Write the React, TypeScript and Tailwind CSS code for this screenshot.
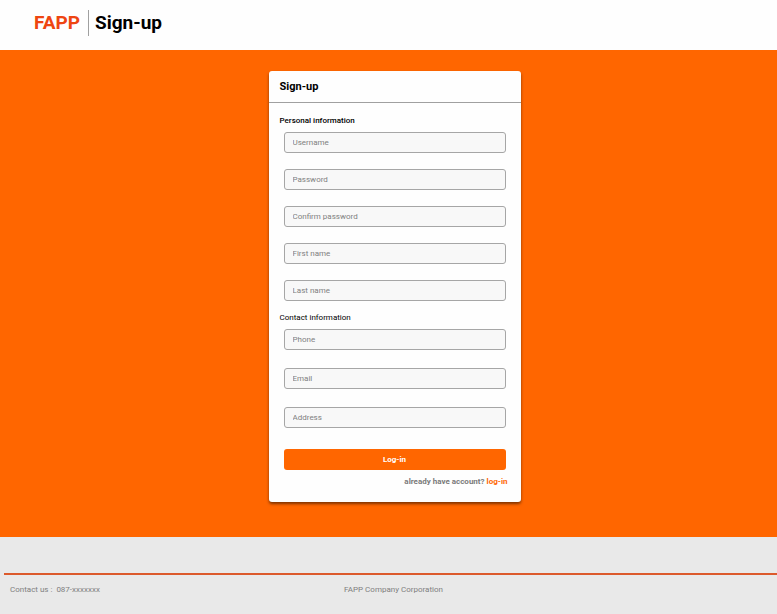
type FieldProps = { id: string; label: string; type?: string };

function Field({ id, label, type = "text" }: FieldProps) {
  return (
    <input
      id={id}
      name={id}
      type={type}
      aria-label={label}
      placeholder={label}
      className="block h-[21px] w-full rounded-[3px] border border-[#a6a6a6] bg-[#f8f8f8] px-2 text-[8px] leading-3 text-gray-800 placeholder:text-[#808080] focus:border-[#ff6600] focus:outline-none"
    />
  );
}

const personalFields: FieldProps[] = [
  { id: "username", label: "Username" },
  { id: "password", label: "Password", type: "password" },
  { id: "confirm-password", label: "Confirm password", type: "password" },
  { id: "first-name", label: "First name" },
  { id: "last-name", label: "Last name" },
];

const contactFields: FieldProps[] = [
  { id: "phone", label: "Phone", type: "tel" },
  { id: "email", label: "Email", type: "email" },
  { id: "address", label: "Address" },
];

export default function App() {
  return (
    <div className="flex min-h-screen flex-col bg-[#e9e9e9] font-[Roboto,sans-serif]">
      <header className="flex h-[50px] items-center bg-[#fefefe] pb-1 pl-[34px] text-[19px] leading-[26px] font-bold">
        <a href="#home" className="pr-2 text-[#ee4511]">
          FAPP
        </a>
        <h1 className="border-l border-[#a0a0a0] pl-1.5 text-black">Sign-up</h1>
      </header>

      <main className="flex justify-center bg-[#ff6600] pt-[21px] pb-[35px] pl-3">
        <form
          className="w-[252px] rounded-[3px] bg-[#fefefe] pb-3.5 shadow-[0_2px_3px_rgba(0,0,0,0.5)]"
          onSubmit={(event) => event.preventDefault()}
        >
          <h2 className="border-b border-[#a0a0a0] px-[11px] pt-2 pb-[7px] text-[11px] leading-4 font-bold text-black">
            Sign-up
          </h2>

          <fieldset aria-labelledby="personal-heading" className="px-[15px] pt-3">
            <h3 id="personal-heading" className="-ml-1 pb-[5px] text-[8px] leading-3 font-medium text-black">
              Personal information
            </h3>
            <div className="flex flex-col gap-4">
              {personalFields.map((field) => (
                <Field key={field.id} {...field} />
              ))}
            </div>
          </fieldset>

          <fieldset aria-labelledby="contact-heading" className="px-[15px] pt-[11px]">
            <h3 id="contact-heading" className="-ml-1 pb-[5px] text-[8px] leading-3 font-normal text-black">
              Contact information
            </h3>
            <div className="flex flex-col gap-[18px]">
              {contactFields.map((field) => (
                <Field key={field.id} {...field} />
              ))}
            </div>
          </fieldset>

          <div className="px-[15px] pt-[21px]">
            <button
              type="submit"
              className="block h-[21px] w-full rounded-[3px] bg-[#ff6600] text-[8px] leading-3 font-bold text-white"
            >
              Log-in
            </button>
          </div>
          <p className="px-[13px] pt-1.5 text-right text-[8px] leading-3 font-bold text-[#7a7a7a]">
            already have account?{" "}
            <a href="#login" className="text-[#ff6600]">
              log-in
            </a>
          </p>
        </form>
      </main>

      <footer className="pt-9 pl-1 text-[8px] leading-3 text-[#808080]">
        <div className="grid grid-cols-3 border-t-2 border-[#dc5a2c] pt-[9px] pl-1.5">
          <p className="whitespace-pre">Contact us :  087-xxxxxxx</p>
          <p className="text-center">FAPP Company Corporation</p>
        </div>
      </footer>
    </div>
  );
}
